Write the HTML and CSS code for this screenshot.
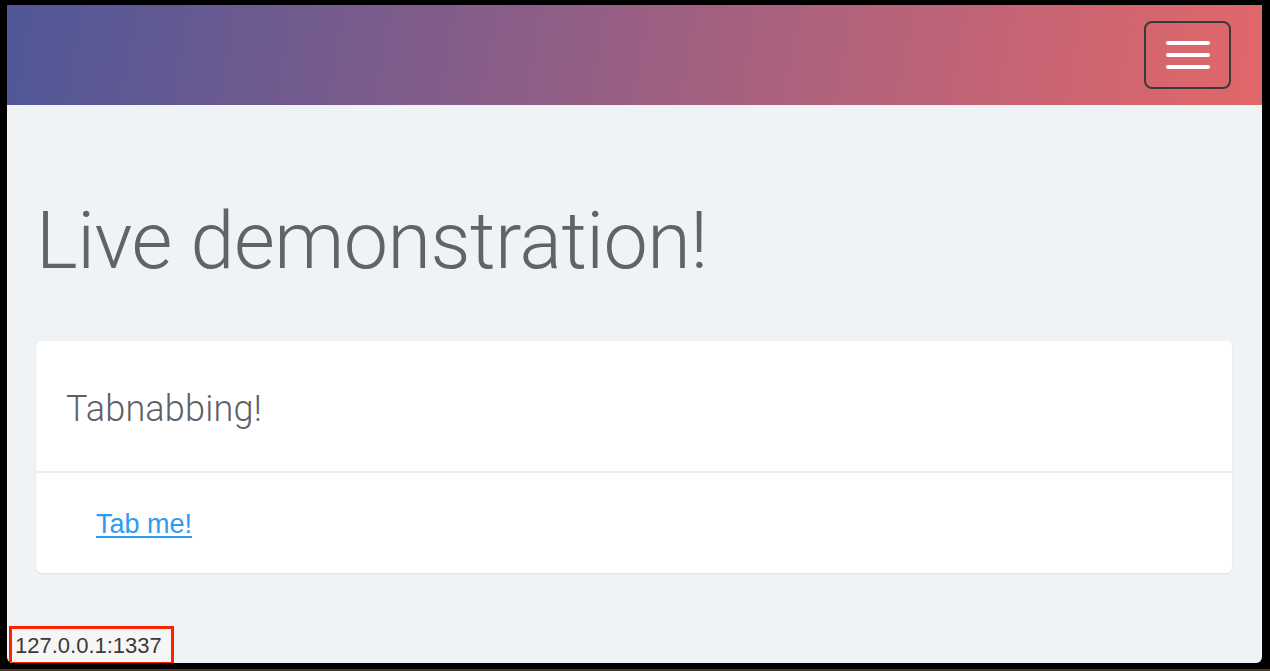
FILE: index.html
```html
<!DOCTYPE html>
<html>
<head>
<meta charset="utf-8">
<link rel="stylesheet" href="styles.css">
</head>
<body>
<div class="window">
  <nav class="navbar">
    <button class="toggler" aria-label="Toggle navigation">
      <span class="bar"></span><span class="bar"></span><span class="bar"></span>
    </button>
  </nav>
  <main class="content">
    <h1 class="title">Live demonstration!</h1>
    <section class="card">
      <div class="card-header">Tabnabbing!</div>
      <div class="card-body"><a href="#" class="link">Tab me!</a></div>
    </section>
  </main>
  <div class="status">127.0.0.1:1337</div>
</div>
</body>
</html>
```

FILE: styles.css
```css
html, body {
  margin: 0;
  padding: 0;
  height: 100%;
}
body {
  background: linear-gradient(to bottom, #000 0, #000 669px, #4a3a2c 669px);
  font-family: "Liberation Sans", Arial, sans-serif;
  overflow: hidden;
}
.window {
  position: relative;
  margin: 5px 8px 0 7px;
  height: 658px;
  background: #eff3f6;
  border-radius: 0 0 6px 6px;
  overflow: hidden;
  display: flex;
  flex-direction: column;
}
.navbar {
  height: 100px;
  flex: none;
  background: linear-gradient(100deg, #4f5797 0%, #7b5c8c 30%, #b0627c 65%, #e2676a 100%);
  display: flex;
  justify-content: flex-end;
  align-items: flex-start;
  padding: 16px 31px 0 0;
  box-sizing: border-box;
}
.toggler {
  width: 87px;
  height: 68px;
  border: 2px solid #3a3a3a;
  border-radius: 8px;
  background: transparent;
  display: flex;
  flex-direction: column;
  align-items: center;
  justify-content: center;
  gap: 8px;
  padding: 0;
}
.bar {
  display: block;
  width: 44px;
  height: 4px;
  border-radius: 2px;
  background: #fff;
}
.content {
  padding: 0 30px 0 29px;
}
.title {
  margin: 88px 0 52px 0;
  font-family: Roboto, "Liberation Sans", sans-serif;
  font-weight: 300;
  font-size: 79px;
  line-height: 96px;
  color: #5f6467;
  letter-spacing: -0.5px;
}
.card {
  background: #fff;
  border-radius: 6px;
  box-shadow: 0 1px 2px rgba(0,0,0,0.08);
}
.card-header {
  height: 132px;
  box-sizing: border-box;
  padding: 48px 30px 0;
  border-bottom: 2px solid #eceeef;
  font-family: Roboto, "Liberation Sans", sans-serif;
  font-weight: 300;
  font-size: 36px;
  line-height: 40px;
  color: #5d6166;
  letter-spacing: 0.2px;
}
.card-body {
  height: 100px;
  box-sizing: border-box;
  padding: 35px 60px 0;
}
.link {
  font-size: 27px;
  line-height: 32px;
  color: #2f9bf0;
  text-decoration: underline;
  text-decoration-thickness: 2px;
  text-underline-offset: 3px;
}
.status {
  position: absolute;
  left: 2px;
  bottom: -2px;
  padding: 3px 9px 3px 3px;
  border: 3px solid #ff2200;
  background: #f6f6f6;
  color: #3a3a3a;
  font-size: 22px;
  line-height: 27px;
}
```
